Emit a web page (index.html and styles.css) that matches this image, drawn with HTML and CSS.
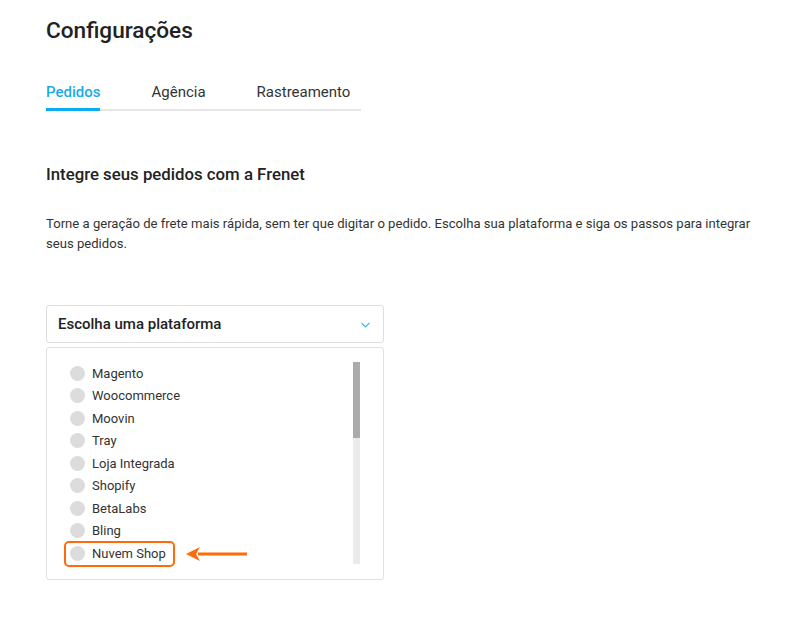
FILE: index.html
```html
<!DOCTYPE html>
<html lang="pt-BR">
<head>
<meta charset="utf-8">
<title>Configurações</title>
<link rel="stylesheet" href="styles.css">
</head>
<body>
<main class="page">
  <h1 class="title">Configurações</h1>
  <nav class="tabs">
    <a class="tab active">Pedidos</a>
    <a class="tab">Agência</a>
    <a class="tab">Rastreamento</a>
  </nav>
  <h2 class="subtitle">Integre seus pedidos com a Frenet</h2>
  <p class="desc">Torne a geração de frete mais rápida, sem ter que digitar o pedido. Escolha sua plataforma e siga os passos para integrar seus pedidos.</p>
  <div class="select">
    <span>Escolha uma plataforma</span>
    <svg class="chev" width="9" height="6" viewBox="0 0 9 6"><path d="M0.5 0.8 L4.5 4.8 L8.5 0.8" fill="none" stroke="#34b6f2" stroke-width="1.2"/></svg>
  </div>
  <div class="list">
    <ul class="options">
      <li class="opt"><span class="radio"></span>Magento</li>
      <li class="opt"><span class="radio"></span>Woocommerce</li>
      <li class="opt"><span class="radio"></span>Moovin</li>
      <li class="opt"><span class="radio"></span>Tray</li>
      <li class="opt"><span class="radio"></span>Loja Integrada</li>
      <li class="opt"><span class="radio"></span>Shopify</li>
      <li class="opt"><span class="radio"></span>BetaLabs</li>
      <li class="opt"><span class="radio"></span>Bling</li>
      <li class="opt highlight"><span class="radio"></span>Nuvem Shop
        <svg class="arrow" width="62" height="16" viewBox="0 0 62 16"><path d="M61 8 H12" stroke="#ff6a0d" stroke-width="3"/><path d="M0 8 L14 1 L10 8 L14 15 Z" fill="#ff6a0d"/></svg>
      </li>
    </ul>
    <div class="scrollbar"><div class="thumb"></div></div>
  </div>
</main>
</body>
</html>
```
FILE: styles.css
```css
html, body {
  margin: 0;
  padding: 0;
  background: #fff;
}
body {
  font-family: Roboto, "Liberation Sans", Arial, sans-serif;
  color: #2b2b2b;
}
.page {
  padding: 17px 46px 0 46px;
}
.title {
  margin: 0;
  font-size: 22.6px;
  font-weight: 500;
  line-height: 28px;
  color: #222;
}
.tabs {
  display: flex;
  width: 315px;
  margin-top: 37px;
  border-bottom: 2px solid #e6e6e6;
}
.tab {
  font-size: 15px;
  line-height: 20px;
  padding-bottom: 6px;
  margin-right: 51px;
  margin-bottom: -2px;
  color: #333;
  border-bottom: 3px solid transparent;
}
.tab:last-child { margin-right: 0; }
.tab.active {
  color: #1aabe9;
  font-weight: 500;
  border-bottom-color: #0aaeee;
}
.subtitle {
  margin: 52px 0 0 0;
  font-size: 16.8px;
  font-weight: 500;
  line-height: 22px;
  color: #222;
}
.desc {
  margin: 29px 0 0 0;
  font-size: 13.1px;
  line-height: 20px;
  color: #333;
  width: 710px;
}
.select {
  margin-top: 51px;
  height: 36px;
  box-sizing: content-box;
  border: 1px solid #dedede;
  border-radius: 3px;
  display: flex;
  align-items: center;
  justify-content: space-between;
  padding: 0 13px 0 11px;
  font-size: 15px;
  font-weight: 500;
  color: #222;
  width: 312px;
}
.chev { margin-top: 1px; }
.list {
  margin-top: 4px;
  border: 1px solid #e0e0e0;
  border-radius: 3px;
  display: flex;
  justify-content: space-between;
  padding: 14px 23px 15px 17px;
  box-sizing: border-box;
  width: 338px;
  height: 233px;
}
.options {
  list-style: none;
  margin: 0;
  padding: 0;
}
.opt {
  display: flex;
  align-items: center;
  height: 22.5px;
  font-size: 13px;
  color: #333;
  position: relative;
  padding-left: 6px;
}
.radio {
  width: 15px;
  height: 15px;
  border-radius: 50%;
  background: #dcdcdc;
  margin-right: 7px;
  flex: none;
}
.highlight::before {
  content: "";
  position: absolute;
  left: 0;
  top: -1.5px;
  width: 107px;
  height: 22px;
  border: 2px solid #ff6a0d;
  border-radius: 5px;
}
.arrow {
  position: absolute;
  left: 122px;
  top: 4px;
}
.scrollbar {
  width: 7px;
  height: 202px;
  background: #ebebeb;
  flex: none;
}
.thumb {
  height: 76px;
  background: #ababab;
}
```
